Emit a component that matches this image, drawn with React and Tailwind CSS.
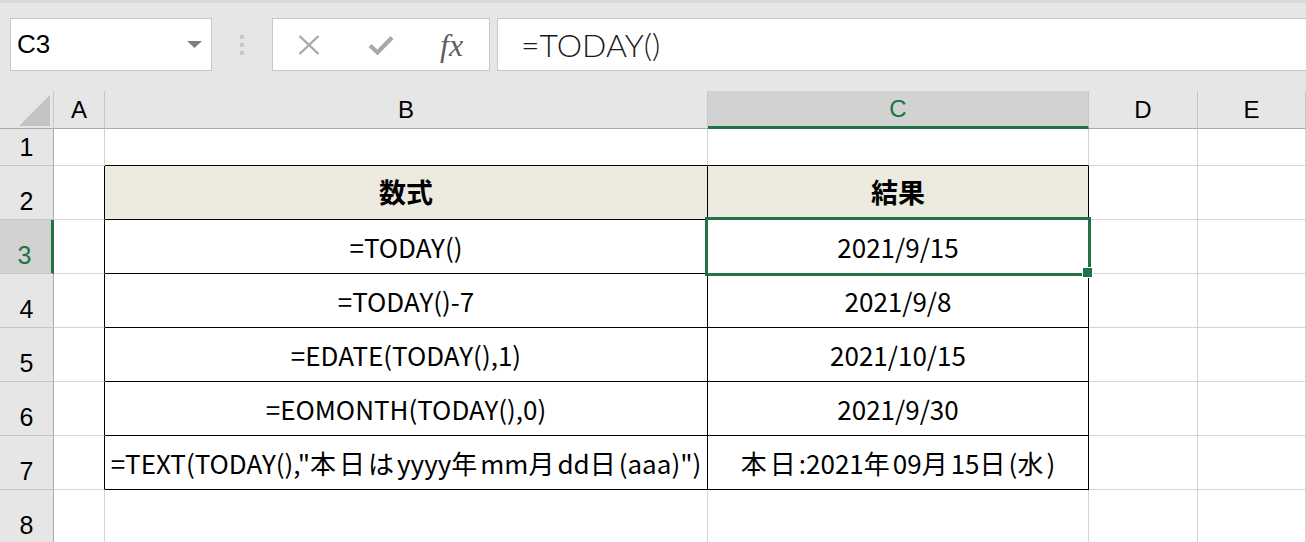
import React from 'react';

const COLUMNS = ['A', 'B', 'C', 'D', 'E'];

// 数式と結果の一覧（行3〜7）
const FORMULAS = [
  { row: 3, formula: '=TODAY()', result: '2021/9/15' },
  { row: 4, formula: '=TODAY()-7', result: '2021/9/8' },
  { row: 5, formula: '=EDATE(TODAY(),1)', result: '2021/10/15' },
  { row: 6, formula: '=EOMONTH(TODAY(),0)', result: '2021/9/30' },
  { row: 7, formula: '=TEXT(TODAY(),"本日はyyyy年mm月dd日(aaa)")', result: '本日:2021年09月15日(水)' },
];

const SELECTED_ROW = 3;
const SELECTED_COL = 'C';

// 全角文字だけ字間を少し広げる
function CellText({ text }) {
  const parts = text.split(/([\u3000-\u9fff]+)/).filter(Boolean);
  return (
    <span>
      {parts.map((p, i) =>
        /[\u3000-\u9fff]/.test(p) ? (
          <span key={i} className="tracking-[3px]">{p}</span>
        ) : (
          <span key={i}>{p}</span>
        )
      )}
    </span>
  );
}

function CornerCell() {
  return (
    <div className="relative bg-[#e6e6e6] border-r border-b border-r-[#c6c6c6] border-b-[#ababab]">
      <svg className="absolute right-[3px] bottom-[2px]" width="31" height="31" viewBox="0 0 31 31">
        <polygon points="31,0 31,31 0,31" fill="#c3c3c3" />
      </svg>
    </div>
  );
}

function ColumnHeader({ label }) {
  const selected = label === SELECTED_COL;
  return (
    <div
      className={
        selected
          ? 'flex items-center justify-center bg-[#d2d2d2] border-r border-r-[#c6c6c6] border-b-[3px] border-b-[#217346] text-[#217346] text-[24px]'
          : 'flex items-center justify-center bg-[#e6e6e6] border-r border-r-[#c6c6c6] border-b border-b-[#ababab] text-black text-[24px]'
      }
    >
      {label}
    </div>
  );
}

function RowHeader({ n }) {
  const selected = n === SELECTED_ROW;
  return (
    <div
      className={
        selected
          ? 'flex items-end justify-center pb-[5px] pr-[2px] leading-none bg-[#d2d2d2] border-b border-b-[#c6c6c6] border-r-[3px] border-r-[#217346] text-[#217346] text-[25px]'
          : 'flex items-end justify-center pb-[5px] leading-none bg-[#e6e6e6] border-b border-b-[#c6c6c6] border-r border-r-[#ababab] text-black text-[25px]'
      }
    >
      {n}
    </div>
  );
}

function Cell({ className = '', children }) {
  return (
    <div className={'flex items-center justify-center bg-white whitespace-nowrap border-r border-b ' + className}>
      {children}
    </div>
  );
}

function FormulaBar() {
  return (
    <div className="h-[91px] bg-[#e6e6e6] border-t-[3px] border-t-[#d9d9d9] pt-[15px] flex items-start">
      {/* 名前ボックス */}
      <div className="ml-[10px] w-[202px] h-[53px] bg-white border border-[#c6c6c6] flex items-center justify-between pl-[6px] pr-[9px]">
        <span className="text-[26px] text-black">C3</span>
        <svg width="15" height="7" viewBox="0 0 15 7">
          <polygon points="0,0 15,0 7.5,7" fill="#7f7f7f" />
        </svg>
      </div>

      <div className="ml-[28px] h-[53px] flex flex-col justify-center gap-[4px]">
        <div className="w-[4px] h-[4px] bg-[#c8c8c8]" />
        <div className="w-[4px] h-[4px] bg-[#c8c8c8]" />
        <div className="w-[4px] h-[4px] bg-[#c8c8c8]" />
      </div>

      {/* キャンセル / 確定 / 関数の挿入 */}
      <div className="ml-[28px] w-[218px] h-[53px] bg-white border border-[#c6c6c6] flex items-center">
        <svg className="ml-[25px]" width="22" height="20" viewBox="0 0 22 20">
          <path d="M1.5 1 L20.5 19 M20.5 1 L1.5 19" stroke="#a8a8a8" strokeWidth="2.4" fill="none" />
        </svg>
        <svg className="ml-[48px]" width="26" height="20" viewBox="0 0 26 20">
          <path d="M2 10.5 L9.5 17.5 L24 2.5" stroke="#a8a8a8" strokeWidth="4.2" fill="none" />
        </svg>
        <span className="ml-[46px] font-['Liberation_Serif',serif] italic text-[32px] leading-none text-[#5f5f5f]">fx</span>
      </div>

      {/* 数式バー */}
      <div className="ml-[7px] flex-1 h-[53px] bg-white border border-r-0 border-[#c6c6c6] flex items-center pl-[23px]">
        <span className="font-['Lato',sans-serif] font-light text-[32px] text-[#1a1a1a]">=TODAY()</span>
      </div>
    </div>
  );
}

function Sheet() {
  return (
    <div className="relative grid grid-cols-[54px_51px_603px_381px_109px_1fr] grid-rows-[38px_37px_repeat(7,54px)]">
      <CornerCell />
      {COLUMNS.map((c) => (
        <ColumnHeader key={c} label={c} />
      ))}

      {/* 行1 */}
      <RowHeader n={1} />
      <Cell className="border-[#d4d4d4]" />
      <Cell className="border-r-[#d4d4d4] border-b-black" />
      <Cell className="border-r-[#d4d4d4] border-b-black" />
      <Cell className="border-[#d4d4d4]" />
      <Cell className="border-[#d4d4d4]" />

      {/* 行2: 見出し */}
      <RowHeader n={2} />
      <Cell className="border-r-black border-b-[#d4d4d4]" />
      <Cell className="border-black !bg-[#edeae0] font-['Noto_Sans_CJK_JP',sans-serif] font-bold text-[27px]">数式</Cell>
      <Cell className="border-black !bg-[#edeae0] font-['Noto_Sans_CJK_JP',sans-serif] font-bold text-[27px]">結果</Cell>
      <Cell className="border-[#d4d4d4]" />
      <Cell className="border-[#d4d4d4]" />

      {FORMULAS.map((f) => (
        <React.Fragment key={f.row}>
          <RowHeader n={f.row} />
          <Cell className="border-r-black border-b-[#d4d4d4]" />
          <Cell className="border-black font-['Noto_Sans_CJK_JP',sans-serif] text-[26px]">
            <CellText text={f.formula} />
          </Cell>
          <Cell className="border-black font-['Noto_Sans_CJK_JP',sans-serif] text-[26px]">
            <CellText text={f.result} />
          </Cell>
          <Cell className="border-[#d4d4d4]" />
          <Cell className="border-[#d4d4d4]" />
        </React.Fragment>
      ))}

      {/* 行8 */}
      <RowHeader n={8} />
      <Cell className="border-[#d4d4d4]" />
      <Cell className="border-[#d4d4d4]" />
      <Cell className="border-[#d4d4d4]" />
      <Cell className="border-[#d4d4d4]" />
      <Cell className="border-[#d4d4d4]" />

      {/* アクティブセル C3 の枠とフィルハンドル */}
      <div className="absolute left-[705px] top-[126px] w-[386px] h-[59px] border-[3px] border-[#217346] pointer-events-none" />
      <div className="absolute left-[1082px] top-[176px] w-[11px] h-[11px] bg-[#217346] border border-white" />
    </div>
  );
}

export default function App() {
  return (
    <div className="w-[1306px] h-[542px] overflow-hidden bg-white font-['Liberation_Sans','Noto_Sans_CJK_JP',sans-serif] text-black">
      <FormulaBar />
      <Sheet />
    </div>
  );
}
